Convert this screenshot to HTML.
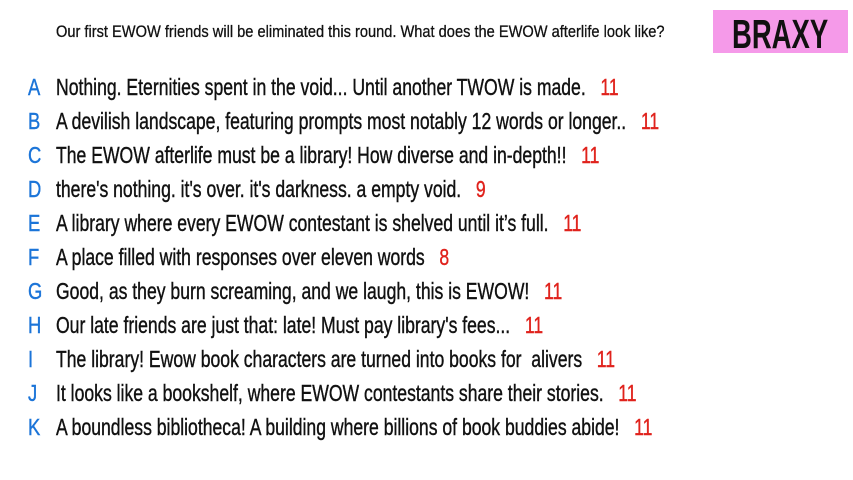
<!DOCTYPE html>
<html><head><meta charset="utf-8"><style>
body{margin:0;width:853px;height:480px;background:#fff;overflow:hidden;position:relative;font-family:"Liberation Sans Narrow","Liberation Sans",sans-serif;}
.q{position:absolute;left:56px;top:22px;font-size:17px;color:#111;white-space:pre;transform:scaleX(0.86);transform-origin:left top;-webkit-text-stroke:0.3px #111;}
.box{position:absolute;left:713px;top:10px;width:135px;height:43px;background:#f59ae9;}
.box span{position:absolute;left:19px;top:1px;font-size:41px;color:#111;transform:scaleX(0.67);transform-origin:left top;white-space:pre;font-weight:bold;}
.r{position:absolute;left:0;height:34px;width:853px;}
.l{position:absolute;left:28px;top:0;font-size:23px;color:#1b74d8;transform:scaleX(0.8);transform-origin:left top;-webkit-text-stroke:0.4px #1b74d8;}
.t{position:absolute;left:56px;top:0;font-size:23px;color:#111;white-space:pre;transform:scaleX(0.765);transform-origin:left top;-webkit-text-stroke:0.4px #111;}
.n{color:#e0221c;-webkit-text-stroke:0.4px #e0221c;}
</style></head><body>
<div class="q">Our first EWOW friends will be eliminated this round. What does the EWOW afterlife look like?</div>
<div class="box"><span>BRAXY</span></div>
<div class="r" style="top:74px"><span class="l">A</span><span class="t">Nothing. Eternities spent in the void... Until another TWOW is made.   <span class="n">11</span></span></div>
<div class="r" style="top:108px"><span class="l">B</span><span class="t">A devilish landscape, featuring prompts most notably 12 words or longer..   <span class="n">11</span></span></div>
<div class="r" style="top:142px"><span class="l">C</span><span class="t">The EWOW afterlife must be a library! How diverse and in-depth!!   <span class="n">11</span></span></div>
<div class="r" style="top:176px"><span class="l">D</span><span class="t">there's nothing. it's over. it's darkness. a empty void.   <span class="n">9</span></span></div>
<div class="r" style="top:210px"><span class="l">E</span><span class="t">A library where every EWOW contestant is shelved until it’s full.   <span class="n">11</span></span></div>
<div class="r" style="top:244px"><span class="l">F</span><span class="t">A place filled with responses over eleven words   <span class="n">8</span></span></div>
<div class="r" style="top:278px"><span class="l">G</span><span class="t">Good, as they burn screaming, and we laugh, this is EWOW!   <span class="n">11</span></span></div>
<div class="r" style="top:312px"><span class="l">H</span><span class="t">Our late friends are just that: late! Must pay library's fees...   <span class="n">11</span></span></div>
<div class="r" style="top:346px"><span class="l">I</span><span class="t">The library! Ewow book characters are turned into books for  alivers   <span class="n">11</span></span></div>
<div class="r" style="top:380px"><span class="l">J</span><span class="t">It looks like a bookshelf, where EWOW contestants share their stories.   <span class="n">11</span></span></div>
<div class="r" style="top:414px"><span class="l">K</span><span class="t">A boundless bibliotheca! A building where billions of book buddies abide!   <span class="n">11</span></span></div>
</body></html>
